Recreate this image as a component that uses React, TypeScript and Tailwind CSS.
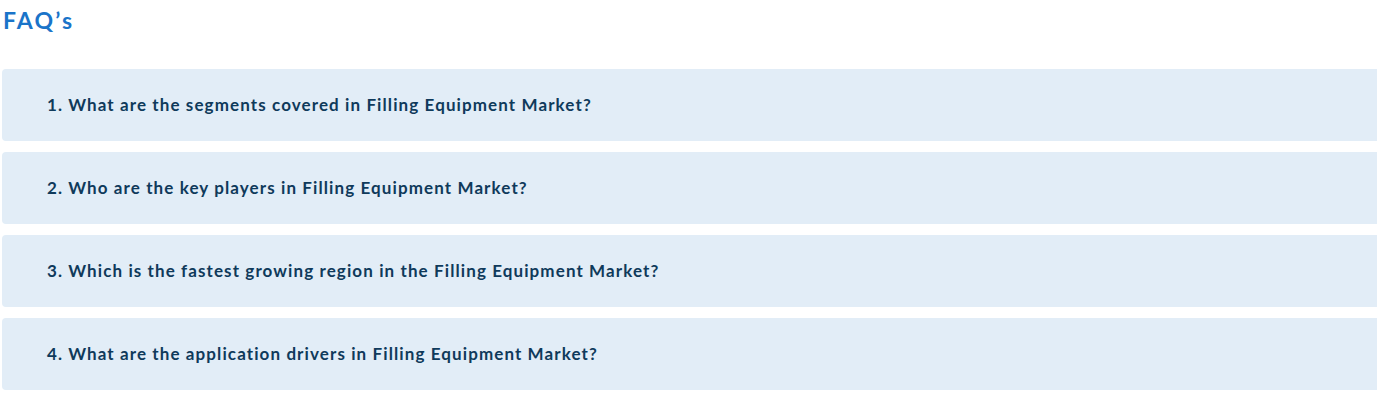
const faqs = [
  "1. What are the segments covered in Filling Equipment Market?",
  "2. Who are the key players in Filling Equipment Market?",
  "3. Which is the fastest growing region in the Filling Equipment Market?",
  "4. What are the application drivers in Filling Equipment Market?",
];

export default function App() {
  return (
    <div className="w-[1377px] h-[394px] overflow-hidden bg-white font-['Lato',sans-serif]">
      <h2 className="pl-[3px] pt-[5px] text-[23px] leading-[30px] font-bold tracking-[2.2px] text-[#1a74c9]">FAQ’s</h2>
      <div className="mt-[34px] ml-[2px] w-[1390px] flex flex-col gap-[11px]">
        {faqs.map((q) => (
          <div key={q} className="h-[72px] rounded-[4px] bg-[#e2edf7] flex items-center pl-[45px]">
            <span className="text-[17px] font-bold text-[#0f3a5b] tracking-[1.1px]">{q}</span>
          </div>
        ))}
      </div>
    </div>
  );
}
